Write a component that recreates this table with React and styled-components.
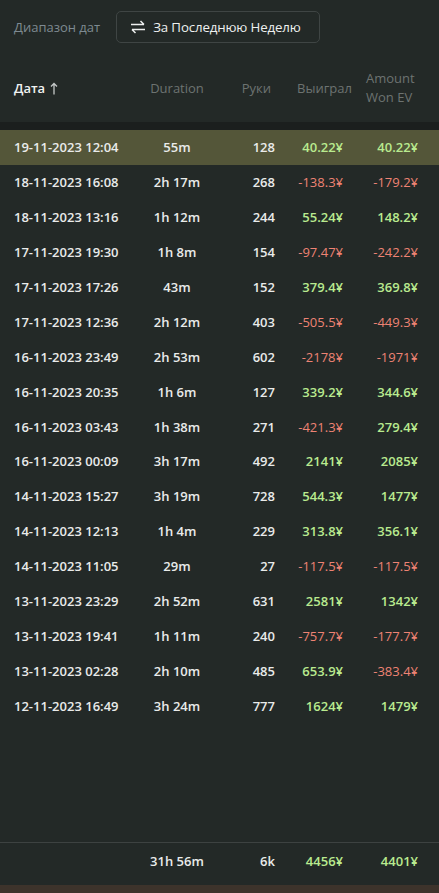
import React from "react";
import styled, { createGlobalStyle } from "styled-components";

const rows = [
    ["19-11-2023 12:04", "55m", "128", "40.22¥", "40.22¥"],
    ["18-11-2023 16:08", "2h 17m", "268", "-138.3¥", "-179.2¥"],
    ["18-11-2023 13:16", "1h 12m", "244", "55.24¥", "148.2¥"],
    ["17-11-2023 19:30", "1h 8m", "154", "-97.47¥", "-242.2¥"],
    ["17-11-2023 17:26", "43m", "152", "379.4¥", "369.8¥"],
    ["17-11-2023 12:36", "2h 12m", "403", "-505.5¥", "-449.3¥"],
    ["16-11-2023 23:49", "2h 53m", "602", "-2178¥", "-1971¥"],
    ["16-11-2023 20:35", "1h 6m", "127", "339.2¥", "344.6¥"],
    ["16-11-2023 03:43", "1h 38m", "271", "-421.3¥", "279.4¥"],
    ["16-11-2023 00:09", "3h 17m", "492", "2141¥", "2085¥"],
    ["14-11-2023 15:27", "3h 19m", "728", "544.3¥", "1477¥"],
    ["14-11-2023 12:13", "1h 4m", "229", "313.8¥", "356.1¥"],
    ["14-11-2023 11:05", "29m", "27", "-117.5¥", "-117.5¥"],
    ["13-11-2023 23:29", "2h 52m", "631", "2581¥", "1342¥"],
    ["13-11-2023 19:41", "1h 11m", "240", "-757.7¥", "-177.7¥"],
    ["13-11-2023 02:28", "2h 10m", "485", "653.9¥", "-383.4¥"],
    ["12-11-2023 16:49", "3h 24m", "777", "1624¥", "1479¥"],
];

const Global = createGlobalStyle`
    body {
        margin: 0;
        background: #232927;
        font-family: "Open Sans", "Noto Sans", sans-serif;
    }
`;

const Page = styled.div`
    width: 439px;
    height: 893px;
    display: flex;
    flex-direction: column;
    background: #232927;
    color: #e6e8e7;
    font-size: 13px;
    overflow: hidden;
`;

const Toolbar = styled.div`
    display: flex;
    align-items: center;
    gap: 16px;
    padding: 11px 14px 0;
    height: 32px;
`;

const Label = styled.span`
    color: #7e8a91;
    font-size: 13px;
`;

const RangeButton = styled.button`
    display: flex;
    align-items: center;
    gap: 7px;
    height: 32px;
    width: 204px;
    padding: 0 0 0 13px;
    border: 1px solid #3f4544;
    border-radius: 5px;
    background: transparent;
    color: #eef0ef;
    font-family: inherit;
    font-size: 13.3px;
    white-space: nowrap;
    letter-spacing: -0.15px;
    cursor: pointer;
`;

const Grid = styled.div`
    display: grid;
    grid-template-columns: 120px 86px 55px 68px 75px;
    padding: 0 21px 0 14px;
    align-items: center;
`;

const HeadRow = styled(Grid)`
    height: 56px;
    margin-top: 17px;
    padding-bottom: 6px;
    color: #6d7371;
    font-size: 13px;
    line-height: 19px;
    border-bottom: 8px solid #1b1f1e;
`;

const HeadCell = styled.div`
    text-align: ${(p) => p.$align || "left"};
    padding: ${(p) => p.$pad || "0"};
    white-space: nowrap;
`;

const SortHead = styled(HeadCell)`
    color: #f0f2f1;
    font-weight: 600;
    display: flex;
    align-items: center;
    gap: 5px;
`;

const Body = styled.div`
    flex: 1;
`;

const Row = styled(Grid)`
    height: 34.9px;
    background: ${(p) => (p.$active ? "#545639" : "transparent")};
`;

const Cell = styled.div`
    text-align: ${(p) => p.$align || "left"};
    white-space: nowrap;
    color: ${(p) =>
        p.$money ? (p.$neg ? "#ee8374" : "#b9ea8f") : "#e9ebea"};
    font-weight: ${(p) => (p.$neg ? 400 : 600)};
`;

const Footer = styled(Grid)`
    height: 43px;
    box-sizing: border-box;
    align-items: start;
    padding-top: 9px;
    line-height: 18px;
    border-top: 1px solid #3d4241;
`;

const BottomStrip = styled.div`
    height: 8px;
    background: #3d332b;
`;

function SwapIcon() {
    return (
        <svg width="16" height="14" viewBox="0 0 16 14" fill="none">
            <path d="M1 4.5h13M10.5 1l3.5 3.5" stroke="#eef0ef" strokeWidth="1.5" />
            <path d="M15 9.5H2M5.5 13L2 9.5" stroke="#eef0ef" strokeWidth="1.5" />
        </svg>
    );
}

function UpArrow() {
    return (
        <svg width="8" height="13" viewBox="0 0 8 13" fill="none">
            <path d="M4 12.5V1.5M1 4.5L4 1.5L7 4.5" stroke="#c4c8c7" strokeWidth="1.3" />
        </svg>
    );
}

export default function App() {
    return (
        <>
            <Global />
            <Page>
                <Toolbar>
                    <Label>Диапазон дат</Label>
                    <RangeButton>
                        <SwapIcon />
                        За Последнюю Неделю
                    </RangeButton>
                </Toolbar>
                <HeadRow>
                    <SortHead>
                        Дата <UpArrow />
                    </SortHead>
                    <HeadCell $align="center">Duration</HeadCell>
                    <HeadCell $align="right" $pad="0 4px 0 0">Руки</HeadCell>
                    <HeadCell $pad="0 0 0 22px">Выиграл</HeadCell>
                    <HeadCell $pad="0 0 0 23px">
                        Amount
                        <br />
                        Won EV
                    </HeadCell>
                </HeadRow>
                <Body>
                    {rows.map((r, i) => (
                        <Row key={i} $active={i === 0}>
                            <Cell>{r[0]}</Cell>
                            <Cell $align="center">{r[1]}</Cell>
                            <Cell $align="right">{r[2]}</Cell>
                            <Cell $align="right" $money $neg={r[3].startsWith("-")}>
                                {r[3]}
                            </Cell>
                            <Cell $align="right" $money $neg={r[4].startsWith("-")}>
                                {r[4]}
                            </Cell>
                        </Row>
                    ))}
                </Body>
                <Footer>
                    <Cell />
                    <Cell $align="center">31h 56m</Cell>
                    <Cell $align="right">6k</Cell>
                    <Cell $align="right" $money>4456¥</Cell>
                    <Cell $align="right" $money>4401¥</Cell>
                </Footer>
                <BottomStrip />
            </Page>
        </>
    );
}
